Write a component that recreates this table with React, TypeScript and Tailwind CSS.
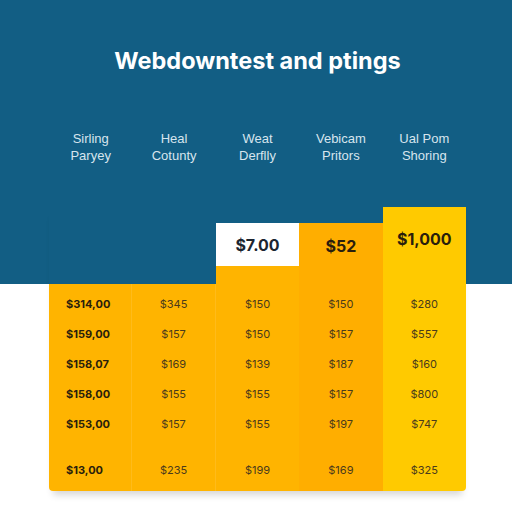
const headers = [
  ['Sirling', 'Paryey'],
  ['Heal', 'Cotunty'],
  ['Weat', 'Derflly'],
  ['Vebicam', 'Pritors'],
  ['Ual Pom', 'Shoring'],
]

const rows = [
  ['$314,00', '$345', '$150', '$150', '$280'],
  ['$159,00', '$157', '$150', '$157', '$557'],
  ['$158,07', '$169', '$139', '$187', '$160'],
  ['$158,00', '$155', '$155', '$157', '$800'],
  ['$153,00', '$157', '$155', '$197', '$747'],
  ['$13,00', '$235', '$199', '$169', '$325'],
]

function Cells({ col, bold }: { col: number; bold?: boolean }) {
  return (
    <div className="flex flex-col pt-[5px] pb-[6px]">
      {rows.map((r, i) => (
        <div
          key={i}
          className={`flex items-center ${bold ? 'justify-start pl-[17px] font-bold text-[#2a1e0c]' : 'justify-center text-[#4a3a1c]'} ${i === 5 ? 'mt-[16px] h-[30px]' : 'h-[30px]'} text-[11px]`}
        >
          {r[col]}
        </div>
      ))}
    </div>
  )
}

export default function App() {
  return (
    <div
      className="w-[512px] h-[512px] bg-[linear-gradient(to_bottom,#125e84_284px,#ffffff_284px)] pl-[49px] pr-[46px] pt-[46px]"
      style={{ fontFamily: '"Liberation Sans", Arial, sans-serif' }}
    >
      <h1 className="text-center text-[23.5px] leading-[30px] font-bold text-white" style={{ fontFamily: 'Inter, "Liberation Sans", sans-serif' }}>
        Webdowntest and ptings
      </h1>

      <div className="grid grid-cols-5 mt-[54px] text-[13px] leading-[17px] text-[#d7e5ee] text-center">
        {headers.map((h) => (
          <div key={h[0]}>
            <div>{h[0]}</div>
            <div>{h[1]}</div>
          </div>
        ))}
      </div>

      <div
        className="grid grid-cols-5 items-end mt-[43px] rounded-sm shadow-[0_8px_7px_-4px_rgba(0,0,0,0.16)]"
        style={{ fontFamily: 'Inter, "Liberation Sans", sans-serif' }}
      >
        <div className="bg-[#ffb400] border-r border-[#ffbb1a] rounded-bl-sm">
          <Cells col={0} bold />
        </div>
        <div className="bg-[#ffb400] border-r border-[#ffbb1a]">
          <Cells col={1} />
        </div>
        <div className="bg-[#ffb400]">
          <div className="h-[43px] bg-white flex items-center justify-center text-[16px] font-bold text-[#1c2530]">
            $7.00
          </div>
          <div className="h-[18px]" />
          <Cells col={2} />
        </div>
        <div className="bg-[#ffae00]">
          <div className="h-[61px] pb-[16px] flex items-center justify-center text-[16px] font-bold text-[#2a1e0c]">
            $52
          </div>
          <Cells col={3} />
        </div>
        <div className="bg-[#ffca00] rounded-br-sm">
          <div className="h-[77px] pb-[14px] flex items-center justify-center text-[16px] font-bold text-[#2a1e0c]">
            $1,000
          </div>
          <Cells col={4} />
        </div>
      </div>
    </div>
  )
}
